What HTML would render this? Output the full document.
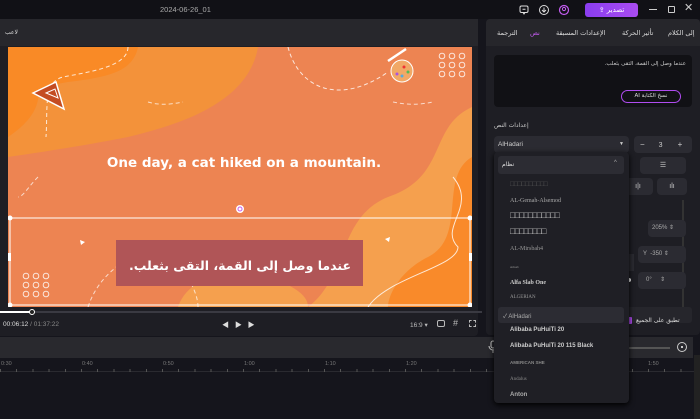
<!DOCTYPE html>
<html><head><meta charset="utf-8"><style>
*{box-sizing:border-box;margin:0;padding:0}
body{width:700px;height:419px;overflow:hidden;background:#15151c;font-family:"Liberation Sans","Noto Sans CJK SC",sans-serif;color:#ccc;position:relative;font-size:7px}
.a{position:absolute}
.ar{font-family:"DejaVu Sans","Noto Sans CJK SC",sans-serif;white-space:nowrap}
.inp{position:absolute;background:#2b2b32;border-radius:4px}
.dd div{position:absolute;left:16px;white-space:nowrap;color:#bbb}
</style></head><body>
<div class="a" style="left:0;top:0;width:700px;height:19px;background:#111116"></div>
<div class="a" style="left:160px;top:5px;color:#aaa;font-size:7.5px">2024-06-26_01</div>
<svg class="a" style="left:518px;top:4px" width="12" height="12" viewBox="0 0 12 12"><rect x="2" y="2" width="8" height="6.5" rx="1.5" fill="none" stroke="#ddd" stroke-width="1"/><path d="M5 8.5l1 1.5 1-1.5M4.5 5.2h3" stroke="#ddd" stroke-width="1" fill="none"/></svg>
<svg class="a" style="left:538px;top:4px" width="12" height="12"><circle cx="6" cy="6" r="4.5" fill="none" stroke="#ddd"/><path d="M6 3.5v4M4 6l2 2 2-2" stroke="#ddd" fill="none"/></svg>
<svg class="a" style="left:558px;top:4px" width="12" height="12"><circle cx="6" cy="6" r="4.5" fill="none" stroke="#c45cf0" stroke-width="1.2"/><circle cx="6" cy="5" r="1.6" fill="none" stroke="#c45cf0"/></svg>
<div class="a" style="left:585px;top:3px;width:53px;height:14px;border-radius:3px;background:linear-gradient(90deg,#8a3df0,#a94cf0);color:#fff;font-size:7px;text-align:center;line-height:14px"><span class="ar" dir="rtl">تصدير ⇪</span></div>
<div class="a" style="left:649px;top:9px;width:8px;height:1px;background:#ccc"></div>
<div class="a" style="left:668px;top:6px;width:7px;height:7px;border:1px solid #ccc;border-radius:1px"></div>
<div class="a" style="left:684px;top:1px;color:#ccc;font-size:11px">✕</div>

<div class="a" style="left:0;top:19px;width:478px;height:317px;background:#1e1e24;border-radius:0 4px 4px 0"></div>
<div class="a" style="left:0;top:19px;width:478px;height:27px;background:#27272c"></div>
<div class="a ar" style="left:5px;top:29px;font-size:6px;color:#ddd">لاعب</div>
<svg class="a" style="left:8px;top:47px" width="464" height="260" viewBox="0 0 464 260">
<rect width="464" height="260" fill="#ed8452"/>
<path d="M0 0H250C240 60 160 80 120 90C70 100 0 110 0 110Z" fill="#f3923a"/>
<path d="M0 0H130C125 25 100 30 60 35C30 40 0 50 0 80Z" fill="#f98a26"/>
<path d="M0 90C30 70 50 40 0 0Z" fill="#f98a26"/>
<path d="M464 60C420 80 440 130 380 150C330 170 340 230 300 260H464Z" fill="#f5a04e"/>
<path d="M464 110C430 130 460 190 420 210C390 225 380 250 380 260H464Z" fill="#f98a2a"/>
<path d="M170 260C180 230 220 220 260 230C290 240 300 250 300 260Z" fill="#f5a04e"/>
<path d="M120 0C120 20 80 25 55 30C35 35 40 60 38 90" stroke="#fff" stroke-dasharray="4 3" fill="none" opacity=".8"/>
<path d="M280 0C290 40 330 60 380 25" stroke="#fff" stroke-dasharray="4 3" fill="none" opacity=".8"/>
<path d="M140 55C150 58 160 58 175 55M385 55C400 58 410 58 425 55" stroke="#fff" stroke-dasharray="4 3" fill="none" opacity=".7"/>
<path d="M30 130C20 140 15 150 10 150" stroke="#fff" stroke-dasharray="4 3" fill="none" opacity=".7"/>
<path d="M80 260C90 230 110 220 120 210M180 230C185 240 190 250 190 260" stroke="#fff" stroke-dasharray="4 3" fill="none" opacity=".7"/>
<path d="M445 130C470 160 430 180 450 200C450 220 380 230 360 260" stroke="#fff" fill="none" opacity=".8"/>
<polygon points="25,46 48,35 56,62" fill="#c44c22" stroke="#fff" stroke-width="1.5"/>
<polygon points="38,46 47,42 50,51" fill="none" stroke="#fff" stroke-width="1"/>
<circle cx="394" cy="24" r="11" fill="#f1a866" stroke="#fff"/>
<circle cx="396" cy="20" r="1.5" fill="#e33"/><circle cx="400" cy="25" r="1.5" fill="#5b5"/><circle cx="394" cy="29" r="1.5" fill="#5ad"/><circle cx="389" cy="27" r="1.5" fill="#a5d"/>
<line x1="380" y1="14" x2="398" y2="2" stroke="#fff" stroke-width="2.5"/>
<g fill="none" stroke="#fff" opacity=".8"><circle cx="434" cy="9" r="2.8"/><circle cx="444" cy="9" r="2.8"/><circle cx="454" cy="9" r="2.8"/><circle cx="434" cy="18" r="2.8"/><circle cx="444" cy="18" r="2.8"/><circle cx="454" cy="18" r="2.8"/><circle cx="434" cy="27" r="2.8"/><circle cx="444" cy="27" r="2.8"/><circle cx="454" cy="27" r="2.8"/>
<circle cx="18" cy="229" r="2.8"/><circle cx="28" cy="229" r="2.8"/><circle cx="38" cy="229" r="2.8"/><circle cx="18" cy="238" r="2.8"/><circle cx="28" cy="238" r="2.8"/><circle cx="38" cy="238" r="2.8"/><circle cx="18" cy="247" r="2.8"/><circle cx="28" cy="247" r="2.8"/><circle cx="38" cy="247" r="2.8"/></g>
<text x="236" y="120" text-anchor="middle" fill="#fff" font-family="DejaVu Sans" font-weight="bold" font-size="13.5">One day, a cat hiked on a mountain.</text>
<rect x="108" y="193" width="247" height="46" fill="#b05557"/>
<text x="232" y="223" text-anchor="middle" direction="rtl" fill="#fff" font-family="DejaVu Sans" font-weight="bold" font-size="12.5">عندما وصل إلى القمة، التقى بثعلب.</text>
<rect x="2" y="171" width="460" height="87" fill="none" stroke="#fff" stroke-width="1"/>
<g fill="#fff"><circle cx="2" cy="171" r="2.5"/><circle cx="462" cy="171" r="2.5"/><circle cx="2" cy="258" r="2.5"/><circle cx="462" cy="258" r="2.5"/><rect x="0" y="206" width="3" height="8"/><rect x="461" y="206" width="3" height="8"/><path d="M72 193l5 2-4 3z"/><path d="M382 190l-5 2 4 3z"/></g>
<circle cx="232" cy="162" r="4" fill="#fff"/><circle cx="232" cy="162" r="2" fill="none" stroke="#c45cf0"/>
</svg>
<div class="a" style="left:0;top:311px;width:482px;height:2px;background:#3a3a42"></div>
<div class="a" style="left:0;top:311px;width:32px;height:2px;background:#fff"></div>
<div class="a" style="left:29px;top:309px;width:6px;height:6px;border-radius:50%;background:#222;border:1px solid #fff"></div>
<div class="a" style="left:3px;top:321px;font-size:6.5px;color:#ddd">00:06:12 <span style="color:#888">/ 01:37:22</span></div>
<div class="a" style="left:222px;top:320px;font-size:7px;color:#ddd">◀ &nbsp; ▶ &nbsp; ▶</div>
<div class="a" style="left:410px;top:321px;font-size:6.5px;color:#bbb">16:9 ▾</div>
<div class="a" style="left:437px;top:320px;width:8px;height:7px;border:1px solid #bbb;border-radius:2px"></div>
<div class="a" style="left:453px;top:318px;font-size:9px;color:#bbb">#</div>
<div class="a" style="left:469px;top:320px;width:7px;height:7px;border:1px dashed #bbb"></div>

<div class="a" style="left:0;top:337px;width:693px;height:21px;background:#29292e"></div>
<div class="a" style="left:0;top:359px;width:700px;height:13px;border-bottom:1px solid #2a2a30;font-size:5.5px;color:#777">
<span class="a" style="left:1px;top:2px">0:30</span><span class="a" style="left:82px;top:2px">0:40</span><span class="a" style="left:163px;top:2px">0:50</span><span class="a" style="left:244px;top:2px">1:00</span><span class="a" style="left:325px;top:2px">1:10</span><span class="a" style="left:406px;top:2px">1:20</span><span class="a" style="left:648px;top:2px">1:50</span></div>
<div class="a" style="left:0;top:369px;width:700px;height:3px;background:repeating-linear-gradient(90deg,#555 0 1px,transparent 1px 16.2px)"></div>
<svg class="a" style="left:488px;top:340px" width="10" height="14"><rect x="3" y="1" width="4" height="7" rx="2" fill="none" stroke="#ccc"/><path d="M1 6a4 4 0 0 0 8 0M5 10v3" stroke="#ccc" fill="none"/></svg>
<div class="a" style="left:628px;top:347px;width:42px;height:2px;background:#555"></div>
<div class="a" style="left:677px;top:342px;width:10px;height:10px;border-radius:50%;border:1px solid #ccc"></div>
<div class="a" style="left:681px;top:346px;width:2px;height:2px;background:#ccc"></div>
<div class="a" style="left:694px;top:355px;width:6px;height:64px;background:#222"></div>

<div class="a" style="left:486px;top:19px;width:214px;height:316px;background:#1e1e24;border-radius:4px"></div>
<div class="a" style="left:486px;top:19px;width:214px;height:27px;background:#26262b;border-radius:4px 4px 0 0"></div>
<div class="a ar" style="left:497px;top:29px;font-size:6.5px;color:#ddd">الترجمة</div>
<div class="a ar" style="left:530px;top:29px;font-size:6.5px;color:#c45cf0">نص</div>
<div class="a ar" style="left:556px;top:29px;font-size:6.5px;color:#ddd">الإعدادات المسبقة</div>
<div class="a ar" style="left:622px;top:29px;font-size:6.5px;color:#ddd">تأثير الحركة</div>
<div class="a ar" style="left:668px;top:29px;font-size:6.5px;color:#ddd">إلى الكلام</div>
<div class="a" style="left:494px;top:55px;width:198px;height:52px;background:#111115;border-radius:4px"></div>
<div class="a ar" dir="rtl" style="left:0;top:61px;width:686px;text-align:right;font-size:5.5px;color:#ccc">عندما وصل إلى القمة، التقى بثعلب.</div>
<div class="a ar" dir="rtl" style="left:621px;top:90px;width:60px;height:13px;border:1px solid #b04cf0;border-radius:7px;font-size:5.5px;color:#ddd;text-align:center;line-height:11px">نسخ الكتابة AI</div>
<div class="a ar" style="left:494px;top:122px;font-size:6px;color:#ccc">إعدادات النص</div>
<div class="inp" style="left:494px;top:136px;width:135px;height:17px"></div>
<div class="a" style="left:498px;top:141px;font-size:6.5px;color:#ccc">AlHadari</div>
<div class="a" style="left:619px;top:141px;font-size:5px;color:#ccc">▼</div>
<div class="inp" style="left:634px;top:136px;width:58px;height:17px;font-size:8px;color:#ccc;line-height:17px"><span style="margin-left:6px">−</span><span style="margin-left:14px;font-size:7px">3</span><span style="margin-left:15px">+</span></div>
<div class="inp" style="left:640px;top:157px;width:46px;height:17px;text-align:center;line-height:17px;color:#ccc">☰</div>
<div class="inp" style="left:623px;top:178px;width:30px;height:17px;text-align:center;line-height:17px;color:#ccc">ı|ı</div>
<div class="inp" style="left:657px;top:178px;width:30px;height:17px;text-align:center;line-height:17px;color:#ccc">ılı</div>
<div class="a" style="left:682px;top:200px;width:2px;height:120px;background:#333"></div>
<div class="inp" style="left:648px;top:220px;width:38px;height:17px;font-size:6px;line-height:17px;padding-left:4px;color:#aaa">205% ⇕</div>
<div class="inp" style="left:638px;top:246px;width:48px;height:17px;font-size:6px;line-height:17px;padding-left:5px;color:#aaa">Y &nbsp;-350 ⇕</div>
<div class="inp" style="left:638px;top:272px;width:48px;height:17px;font-size:6px;line-height:17px;padding-left:8px;color:#aaa">0° &nbsp; &nbsp; ⇕</div>
<div class="a" style="left:628px;top:254px;width:6px;height:17px;background:#2b2b32"></div>
<div class="a" style="left:627px;top:278px;width:4px;height:4px;border-radius:50%;background:#fff"></div>
<div class="a" style="left:620px;top:307px;width:72px;height:16px;background:#26262c;border-radius:3px"></div>
<div class="a" style="left:627px;top:317px;width:5px;height:7px;background:#b04cf0;border-radius:1px"></div>
<div class="a ar" style="left:636px;top:317px;font-size:6px;color:#ddd">تطبق على الجميع</div>

<div class="a dd" style="left:494px;top:152px;width:135px;height:251px;background:#1f1f25;border-radius:4px;box-shadow:0 2px 6px #000;font-size:6px">
<div style="left:4px;top:4px;width:126px;height:18px;background:#2c2c33;border-radius:3px;"></div>
<div class="ar" style="left:8px;top:9px;color:#ddd">نظام</div><div style="left:120px;top:8px;color:#aaa">^</div>
<div style="top:29px;color:#555;font-size:7px;letter-spacing:-.5px">□□□□□□□□□□</div>
<div style="top:46px;color:#aaa;font-family:'Liberation Serif'">AL-Gemah-Alsemod</div>
<div style="top:58px;color:#bbb;font-size:9px;letter-spacing:-1px">□□□□□□□□□□□</div>
<div style="top:74px;color:#bbb;font-size:9px;letter-spacing:-1px">□□□□□□□□</div>
<div style="top:94px;color:#999;font-family:'Liberation Serif'">AL-Mirsbah4</div>
<div style="top:113px;color:#888;font-size:3px">aldsab</div>
<div style="top:128px;color:#ccc;font-weight:bold;font-family:'Liberation Serif'">Alfa Slab One</div>
<div style="top:143px;color:#999;font-family:'Liberation Serif';font-size:5px">ALGERIAN</div>
<div style="left:4px;top:155px;width:126px;height:16px;background:#2c2c33;border-radius:3px"></div>
<div style="left:9px;top:159px;color:#aaa">✓ AlHadari</div>
<div style="top:175px;color:#ccc;font-weight:bold">Alibaba PuHuiTi 20</div>
<div style="top:191px;color:#ccc;font-weight:bold">Alibaba PuHuiTi 20 115 Black</div>
<div style="top:208px;color:#888;font-size:4.5px;font-weight:bold">AMERICAN SHE</div>
<div style="top:225px;color:#888;font-family:'Liberation Serif';font-size:5px">Andalus</div>
<div style="top:240px;color:#aaa;font-weight:bold">Anton</div>
</div>
</body></html>
